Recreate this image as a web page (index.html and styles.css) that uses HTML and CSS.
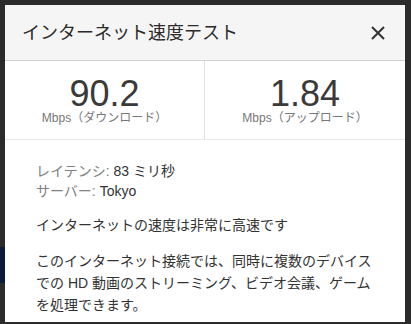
FILE: index.html
```html
<!DOCTYPE html>
<html lang="ja">
<head>
<meta charset="utf-8">
<link rel="stylesheet" href="styles.css">
</head>
<body>
<div class="dialog">
  <div class="header">
    <div class="title">インターネット速度テスト</div>
    <svg class="close" width="14" height="14" viewBox="0 0 14 14"><path d="M1 1 L13 13 M13 1 L1 13" stroke="#333" stroke-width="2" fill="none"/></svg>
  </div>
  <div class="stats">
    <div class="stat">
      <div class="num">90.2</div>
      <div class="unit">Mbps（ダウンロード）</div>
    </div>
    <div class="stat">
      <div class="num">1.84</div>
      <div class="unit">Mbps（アップロード）</div>
    </div>
  </div>
  <div class="body">
    <div class="info">
      <div><span class="label">レイテンシ:</span> 83 ミリ秒</div>
      <div><span class="label">サーバー:</span> Tokyo</div>
    </div>
    <p class="para">インターネットの速度は非常に高速です</p>
    <p class="para">このインターネット接続では、同時に複数のデバイスでの HD 動画のストリーミング、ビデオ会議、ゲームを処理できます。</p>
  </div>
</div>
</body>
</html>
```

FILE: styles.css
```css
* { box-sizing: border-box; }
html, body { margin: 0; }
body {
  width: 411px;
  height: 324px;
  overflow: hidden;
  padding: 5px 6px 2px 5px;
  background: linear-gradient(#0c1c36, #0c1c36) no-repeat 0 247px / 5px 36px, #2b2b2b;
  font-family: "Liberation Sans", "Noto Sans CJK JP", sans-serif;
  color: #333;
}
.dialog {
  width: 400px;
  height: 317px;
  background: #fff;
  overflow: hidden;
}
.header {
  height: 56px;
  background: #f5f5f5;
  border-bottom: 1px solid #d0d0d0;
  display: flex;
  align-items: center;
  justify-content: space-between;
  padding: 0 20px 0 17px;
}
.title {
  font-size: 18px;
  line-height: 24px;
  color: #2a2a2a;
}
.close { display: block; }
.stats {
  display: grid;
  grid-template-columns: 200px 1fr;
  height: 79px;
  border-bottom: 1px solid #e8e8e8;
}
.stat {
  text-align: center;
  padding-top: 15px;
}
.stat:first-child { border-right: 1px solid #e3e3e3; }
.num {
  font-size: 36px;
  line-height: 36px;
  color: #3a3a3a;
}
.unit {
  font-size: 12px;
  line-height: 13px;
  color: #777;
}
.body {
  padding: 21px 29px 0 31px;
  font-size: 14px;
}
.info {
  line-height: 20px;
  color: #333;
}
.label { color: #808080; }
.para {
  margin: 13px 0 0;
  line-height: 22px;
  color: #333;
}
.para + .para { margin-top: 14px; }
```
